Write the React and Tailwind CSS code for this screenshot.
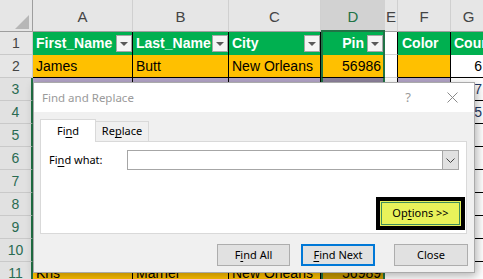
import React from "react";

const Filter = () => (
  <span className="flex h-[17px] w-[16px] shrink-0 items-center justify-center border border-[#a6a6a6] bg-[#f4f4f4]">
    <span className="h-0 w-0 border-x-[4px] border-t-[4px] border-x-transparent border-t-[#595959]" />
  </span>
);

const RowNum = ({ n, sel }) => (
  <div
    className={
      sel
        ? "flex w-[33px] shrink-0 items-center justify-center border-b border-r-2 border-b-[#c9c9c9] border-r-[#217346] bg-[#e1e1e1] text-[#2a6b52]"
        : "flex w-[33px] shrink-0 items-center justify-center border-b border-r border-[#c9c9c9] bg-[#e6e6e6] text-[#444]"
    }
  >
    {n}
  </div>
);

// plain rows hidden under the dialog
const filler = [5, 6, 7, 8, 9, 10];

const Btn = ({ children, active, w }) => (
  <div
    className={
      active
        ? "flex h-[22px] w-[74px] items-center justify-center border-2 border-[#0078d7] bg-[#e1e1e1]"
        : w === 73
        ? "flex h-[22px] w-[73px] items-center justify-center border border-[#adadad] bg-[#e1e1e1]"
        : "flex h-[22px] w-[74px] items-center justify-center border border-[#adadad] bg-[#e1e1e1]"
    }
  >
    {children}
  </div>
);

export default function App() {
  return (
    <div className="relative h-[279px] w-[483px] overflow-hidden bg-white font-['Liberation_Sans',Arial,sans-serif] text-[14px] text-black">
      {/* column headers */}
      <div className="flex h-[32px]">
        <div className="w-[33px] shrink-0 border-b border-r border-[#9e9e9e] bg-[#e6e6e6]">
          <svg width="32" height="31">
            <polygon points="15,29 29,29 29,15" fill="#b7b7b7" />
          </svg>
        </div>
        <div className="flex w-[100px] shrink-0 items-end justify-center border-b border-r border-b-[#9e9e9e] border-r-[#d0d0d0] bg-[#e6e6e6] pb-[3px] text-[15px] text-[#444]">A</div>
        <div className="flex w-[96px] shrink-0 items-end justify-center border-b border-r border-b-[#9e9e9e] border-r-[#d0d0d0] bg-[#e6e6e6] pb-[3px] text-[15px] text-[#444]">B</div>
        <div className="flex w-[92px] shrink-0 items-end justify-center border-b border-r border-b-[#9e9e9e] border-r-[#d0d0d0] bg-[#e6e6e6] pb-[3px] text-[15px] text-[#444]">C</div>
        <div className="flex w-[64px] shrink-0 items-end justify-center border-b-2 border-b-[#217346] bg-[#d2d2d2] pb-[2px] text-[15px] text-[#217346]">D</div>
        <div className="flex w-[13px] shrink-0 items-end justify-center border-b border-r border-b-[#9e9e9e] border-r-[#d0d0d0] bg-[#e6e6e6] pb-[3px] text-[15px] text-[#444]">E</div>
        <div className="flex w-[53px] shrink-0 items-end justify-center border-b border-r border-b-[#9e9e9e] border-r-[#d0d0d0] bg-[#e6e6e6] pb-[3px] text-[15px] text-[#444]">F</div>
        <div className="flex w-[35px] shrink-0 items-end justify-center border-b border-b-[#9e9e9e] bg-[#e6e6e6] pb-[3px] text-[15px] text-[#444]">G</div>
      </div>

      {/* row 1 */}
      <div className="flex h-[23px]">
        <RowNum n={1} />
        <div className="flex w-[100px] shrink-0 items-center border-r border-black bg-[#00b050] pl-[3px] font-bold text-white">
          <span className="min-w-0 flex-1 overflow-hidden whitespace-nowrap">First_Name</span>
          <Filter />
        </div>
        <div className="flex w-[96px] shrink-0 items-center border-r border-black bg-[#00b050] pl-[3px] font-bold text-white">
          <span className="min-w-0 flex-1 overflow-hidden whitespace-nowrap">Last_Name</span>
          <Filter />
        </div>
        <div className="flex w-[92px] shrink-0 items-center border-r border-black bg-[#00b050] pl-[3px] font-bold text-white">
          <span className="min-w-0 flex-1 overflow-hidden whitespace-nowrap">City</span>
          <Filter />
        </div>
        <div className="flex w-[64px] shrink-0 items-center justify-end gap-[3px] border-x-2 border-[#217346] bg-[#00b050] font-bold text-white">
          <span>Pin</span>
          <Filter />
        </div>
        <div className="w-[13px] shrink-0 border-b border-r border-b-[#d4d4d4] border-r-black bg-white" />
        <div className="flex w-[53px] shrink-0 items-center border-r border-black bg-[#00b050] pl-[4px] font-bold text-white">Color</div>
        <div className="flex w-[35px] shrink-0 items-center overflow-hidden whitespace-nowrap bg-[#00b050] pl-[3px] font-bold text-white">Country</div>
      </div>

      {/* row 2 */}
      <div className="flex h-[23px]">
        <RowNum n={2} />
        <div className="flex w-[100px] shrink-0 items-center border-b border-r border-black bg-[#ffc000] pl-[3px]">James</div>
        <div className="flex w-[96px] shrink-0 items-center border-b border-r border-black bg-[#ffc000] pl-[3px]">Butt</div>
        <div className="flex w-[92px] shrink-0 items-center overflow-hidden whitespace-nowrap border-b border-r border-black bg-[#ffc000] pl-[3px]">New Orleans</div>
        <div className="flex w-[64px] shrink-0 items-center justify-end border-x-2 border-b border-[#217346] border-b-black bg-[#ffc000] pr-[2px]">56986</div>
        <div className="w-[13px] shrink-0 border-b border-r border-b-[#d4d4d4] border-r-black bg-white" />
        <div className="w-[53px] shrink-0 border-b border-r border-black bg-[#ffc000]" />
        <div className="flex w-[35px] shrink-0 items-center justify-end border-b border-black bg-white pr-[4px]">6</div>
      </div>

      {/* row 3 */}
      <div className="flex h-[23px]">
        <RowNum n={3} sel />
        <div className="w-[100px] shrink-0 border-b border-r border-black bg-[#b4a5c8]" />
        <div className="w-[96px] shrink-0 border-b border-r border-black bg-[#b4a5c8]" />
        <div className="w-[92px] shrink-0 border-b border-r border-black bg-[#b4a5c8]" />
        <div className="w-[64px] shrink-0 border-x-2 border-b border-[#217346] border-b-black bg-[#8f839c]" />
        <div className="w-[13px] shrink-0 border-b border-r border-b-[#d4d4d4] border-r-black bg-white" />
        <div className="w-[53px] shrink-0 border-b border-r border-black bg-[#b4a5c8]" />
        <div className="flex w-[35px] shrink-0 items-center justify-end border-b border-black bg-white pr-[4px] text-[#1f3864]">7</div>
      </div>

      {/* row 4 */}
      <div className="flex h-[23px]">
        <RowNum n={4} sel />
        <div className="w-[100px] shrink-0 border-b border-r border-black bg-white" />
        <div className="w-[96px] shrink-0 border-b border-r border-black bg-white" />
        <div className="w-[92px] shrink-0 border-b border-r border-black bg-white" />
        <div className="w-[64px] shrink-0 border-x-2 border-b border-[#217346] border-b-black bg-[#d9d9d9]" />
        <div className="w-[13px] shrink-0 border-b border-r border-b-[#d4d4d4] border-r-black bg-white" />
        <div className="w-[53px] shrink-0 border-b border-r border-black bg-white" />
        <div className="flex w-[35px] shrink-0 items-center justify-end border-b border-black bg-white pr-[4px] text-[#1f3864]">5</div>
      </div>

      {filler.map((n) => (
        <div key={n} className="flex h-[23px]">
          <RowNum n={n} sel />
          <div className="w-[100px] shrink-0 border-b border-r border-black bg-white" />
          <div className="w-[96px] shrink-0 border-b border-r border-black bg-white" />
          <div className="w-[92px] shrink-0 border-b border-r border-black bg-white" />
          <div className="w-[64px] shrink-0 border-x-2 border-b border-[#217346] border-b-black bg-[#d9d9d9]" />
          <div className="w-[13px] shrink-0 border-b border-r border-b-[#d4d4d4] border-r-black bg-white" />
          <div className="w-[53px] shrink-0 border-b border-r border-black bg-white" />
          <div className="w-[35px] shrink-0 border-b border-black bg-white" />
        </div>
      ))}

      {/* row 11 */}
      <div className="flex h-[23px]">
        <RowNum n={11} sel />
        <div className="flex w-[100px] shrink-0 items-center border-r border-black bg-[#ffc000] pl-[3px]">Kris</div>
        <div className="flex w-[96px] shrink-0 items-center border-r border-black bg-[#ffc000] pl-[3px]">Marrier</div>
        <div className="flex w-[92px] shrink-0 items-center overflow-hidden whitespace-nowrap border-r border-black bg-[#ffc000] pl-[3px]">New Orleans</div>
        <div className="flex w-[64px] shrink-0 items-center justify-end border-x-2 border-[#217346] bg-[#c99a00] pr-[2px]">56989</div>
        <div className="w-[13px] shrink-0 bg-white" />
        <div className="w-[53px] shrink-0 bg-white" />
        <div className="w-[35px] shrink-0 bg-white" />
      </div>

      {/* Find and Replace dialog */}
      <div className="absolute left-[33px] top-[82px] flex h-[191px] w-[442px] flex-col border border-[#aaaaaa] bg-[#f0f0f0] font-['Noto_Sans',sans-serif] text-[11px] text-black shadow-[2px_3px_9px_rgba(0,0,0,0.3)]">
        <div className="flex h-[29px] shrink-0 items-center bg-white pl-[8px] pr-[16px]">
          <span className="text-[11.5px] text-[#9a9a9a]">Find and Replace</span>
          <span className="ml-auto text-[13px] text-[#9a9a9a]">?</span>
          <svg className="ml-[36px]" width="11" height="11" viewBox="0 0 11 11">
            <path d="M0.5 0.5 L10.5 10.5 M10.5 0.5 L0.5 10.5" stroke="#8a8a8a" strokeWidth="1" />
          </svg>
        </div>

        <div className="flex flex-1 flex-col px-[6px] pb-[6px] pt-[7px]">
          <div className="flex h-[22px] items-end">
            <div className="relative z-10 -mb-px flex h-[23px] w-[56px] items-center justify-center border-x border-t border-[#d9d9d9] bg-white">
              Fi<u className="underline-offset-2">n</u>d
            </div>
            <div className="flex h-[20px] w-[53px] items-center justify-center border-r border-t border-[#d9d9d9] bg-[#f0f0f0]">
              Re<u className="underline-offset-2">p</u>lace
            </div>
          </div>

          <div className="flex h-[93px] w-[427px] flex-col border border-[#d9d9d9] bg-white pl-[8px] pt-[8px]">
            <div className="flex items-center">
              <span className="w-[78px]">
                Fi<u className="underline-offset-2">n</u>d what:
              </span>
              <div className="flex h-[20px] w-[332px] border border-[#a6a6a6] bg-white">
                <div className="flex-1" />
                <div className="flex w-[16px] items-center justify-center border-l border-[#a6a6a6] bg-[#e1e1e1]">
                  <svg width="9" height="5" viewBox="0 0 9 5">
                    <path d="M0.5 0.5 L4.5 4.5 L8.5 0.5" fill="none" stroke="#444" strokeWidth="1" />
                  </svg>
                </div>
              </div>
            </div>

            <div className="mb-[3px] mr-[1px] mt-auto flex h-[33px] w-[89px] self-end border-4 border-black bg-[#e8f25a] p-[1px]">
              <div className="flex flex-1 items-center justify-center border border-[#3f8f5c]">
                Op<u className="underline-offset-2">t</u>ions &gt;&gt;
              </div>
            </div>
          </div>

          <div className="mt-[10px] flex justify-end">
            <Btn w={73}>
              F<u className="underline-offset-2">i</u>nd All
            </Btn>
            <div className="ml-[11px]">
              <Btn active>
                <u className="underline-offset-2">F</u>ind Next
              </Btn>
            </div>
            <div className="ml-[19px]">
              <Btn>Close</Btn>
            </div>
          </div>
        </div>
      </div>
    </div>
  );
}
